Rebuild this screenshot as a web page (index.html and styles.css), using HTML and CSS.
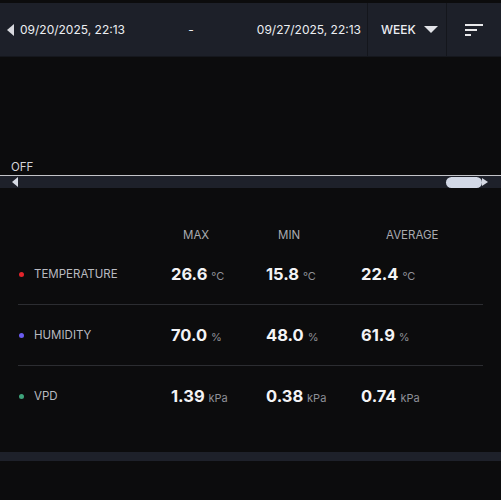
FILE: index.html
```html
<!DOCTYPE html>
<html lang="en">
<head>
  <meta charset="utf-8">
  <title>Sensor history</title>
  <link rel="stylesheet" href="styles.css">
</head>
<body>
  <div class="topbar">
    <div class="range">
      <span class="arrow-left"></span>
      <span class="date">09/20/2025, 22:13</span>
      <span class="dash">-</span>
      <span class="date">09/27/2025, 22:13</span>
    </div>
    <div class="period">WEEK <span class="caret"></span></div>
    <div class="sort">
      <svg width="18" height="14" viewBox="0 0 18 14">
        <rect x="0" y="0" width="18" height="2" fill="#e8e8ea"/>
        <rect x="0" y="5" width="12" height="2" fill="#e8e8ea"/>
        <rect x="0" y="10" width="6" height="2" fill="#e8e8ea"/>
      </svg>
    </div>
  </div>

  <div class="chart">
    <div class="off">OFF</div>
  </div>
  <div class="scroller">
    <span class="scroll-left"></span>
    <span class="thumb"></span>
    <span class="scroll-right"></span>
  </div>

  <div class="stats">
    <div class="row head">
      <div></div>
      <div class="col-head max">MAX</div>
      <div class="col-head min">MIN</div>
      <div class="col-head avg">AVERAGE</div>
    </div>
    <div class="row">
      <div class="label"><span class="dot red"></span>TEMPERATURE</div>
      <div class="val">26.6 <span class="unit">°C</span></div>
      <div class="val">15.8 <span class="unit">°C</span></div>
      <div class="val">22.4 <span class="unit">°C</span></div>
    </div>
    <div class="rule"></div>
    <div class="row">
      <div class="label"><span class="dot purple"></span>HUMIDITY</div>
      <div class="val">70.0 <span class="unit">%</span></div>
      <div class="val">48.0 <span class="unit">%</span></div>
      <div class="val">61.9 <span class="unit">%</span></div>
    </div>
    <div class="rule"></div>
    <div class="row">
      <div class="label"><span class="dot green"></span>VPD</div>
      <div class="val">1.39 <span class="unit">kPa</span></div>
      <div class="val">0.38 <span class="unit">kPa</span></div>
      <div class="val">0.74 <span class="unit">kPa</span></div>
    </div>
  </div>

  <div class="footer-bar"></div>
</body>
</html>
```

FILE: styles.css
```css
body {
  margin: 0;
  background: #0c0c0d;
  font-family: Inter, "Liberation Sans", Arial, sans-serif;
  color: #fff;
}

.topbar {
  margin-top: 3px;
  height: 53px;
  background: #1d2029;
  display: flex;
  border-bottom: 1px solid #15171d;
}

.range {
  width: 368px;
  display: flex;
  align-items: center;
  padding: 0 6px 0 7px;
  box-sizing: border-box;
  border-right: 1px solid #14161c;
  font-size: 12px;
  color: #eceef2;
}

.arrow-left {
  width: 0;
  height: 0;
  border-top: 6px solid transparent;
  border-bottom: 6px solid transparent;
  border-right: 7px solid #d8d9de;
  margin-right: 6px;
}

.dash {
  margin: 0 auto;
}

.period {
  width: 79px;
  display: flex;
  align-items: center;
  padding-left: 13px;
  box-sizing: border-box;
  border-right: 1px solid #14161c;
  font-size: 12px;
  font-weight: 500;
  color: #eceef2;
}

.caret {
  width: 0;
  height: 0;
  border-left: 7px solid transparent;
  border-right: 7px solid transparent;
  border-top: 7px solid #e2e3e8;
  margin-left: 8px;
}

.sort {
  flex: 1;
  display: flex;
  align-items: center;
  justify-content: center;
  padding-top: 2px;
}

.chart {
  height: 118px;
  display: flex;
  align-items: flex-end;
}

.off {
  font-size: 11.5px;
  color: #d4d4d8;
  padding-left: 11px;
  line-height: 14px;
  margin-bottom: 1px;
}

.scroller {
  height: 12px;
  border-top: 1px solid #c3c4c8;
  background: #1e212a;
  display: flex;
  align-items: center;
}

.scroll-left {
  width: 0;
  height: 0;
  border-top: 5px solid transparent;
  border-bottom: 5px solid transparent;
  border-right: 6px solid #d6dae4;
  margin-left: 12px;
}

.thumb {
  margin-left: auto;
  width: 36px;
  height: 11px;
  border-radius: 6px;
  background: #d3d9e6;
}

.scroll-right {
  width: 0;
  height: 0;
  border-top: 4px solid transparent;
  border-bottom: 4px solid transparent;
  border-left: 6px solid #d6dae4;
  margin-right: 13px;
}

.stats {
  padding: 38px 18px 0;
}

.row {
  display: grid;
  grid-template-columns: 153px 95px 95px 1fr;
  align-items: center;
  height: 60px;
}

.row.head {
  height: 18px;
}

.col-head {
  font-size: 11.5px;
  color: #a9aab0;
}

.col-head.max { padding-left: 12px; }
.col-head.min { padding-left: 12px; }
.col-head.avg { padding-left: 25px; }

.label {
  display: flex;
  align-items: center;
  font-size: 11.5px;
  color: #b9bac0;
}

.dot {
  width: 5px;
  height: 5px;
  border-radius: 50%;
  margin: 0 10px 0 1px;
}

.red { background: #e3242b; }
.purple { background: #6b5cf0; }
.green { background: #3ea37b; }

.val {
  font-size: 16.5px;
  font-weight: 700;
  color: #f4f4f6;
}

.unit {
  font-size: 11px;
  font-weight: 400;
  color: #8e9097;
}

.rule {
  height: 1px;
  background: #2c2d31;
}

.footer-bar {
  margin-top: 26px;
  height: 9px;
  background: #1e212a;
}
```
